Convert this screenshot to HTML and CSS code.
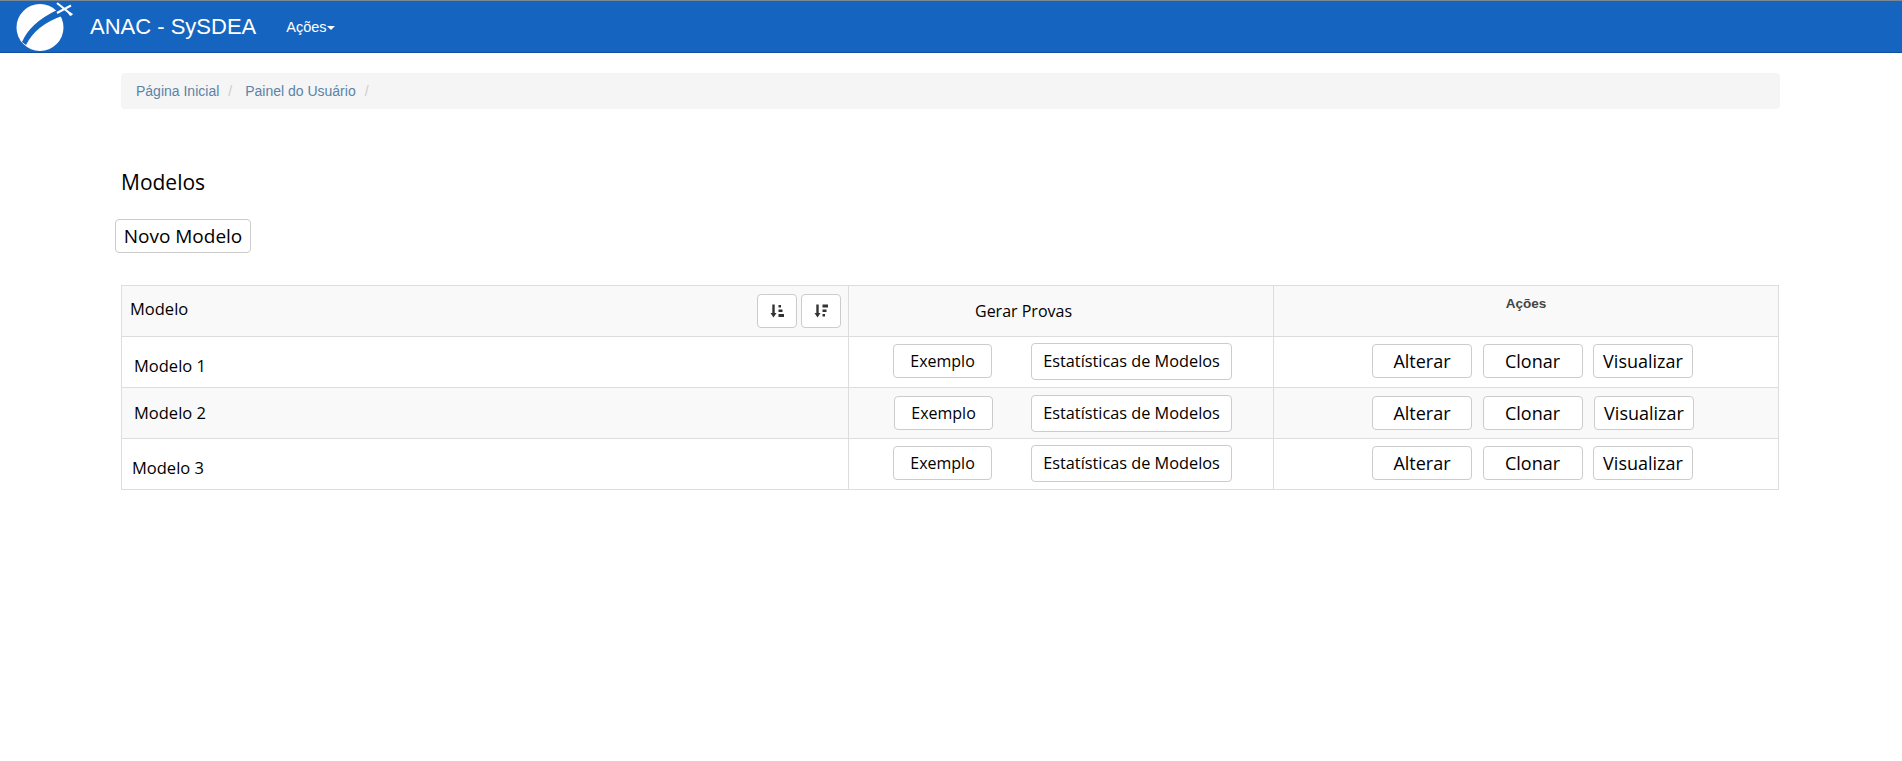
FILE: index.html
```html
<!DOCTYPE html>
<html lang="pt-BR">
<head>
  <meta charset="UTF-8" />
  <title>ANAC - SySDEA</title>
  <link rel="stylesheet" href="styles.css">
</head>
<body>

  <!-- Navbar -->
  <nav class="navbar">
    <svg class="logo" viewBox="0 0 62 52" width="62" height="52">
      <circle cx="28" cy="26.5" r="23.5" fill="#fff"/>
      <path d="M10 41 Q18 22 45 9 L50 15 Q24 24 14 44 Z" fill="#1565c0"/>
      <path d="M45 2 L60 14" stroke="#fff" stroke-width="2.2" fill="none"/>
      <path d="M59 4.5 L45 12" stroke="#fff" stroke-width="2" fill="none"/>
      <path d="M54 9 L61 13 L58 15 Z" fill="#fff"/>
    </svg>
    <span class="brand">ANAC - SySDEA</span>
    <span class="nav-link">Ações<i class="caret"></i></span>
  </nav>

  <div class="container">
    <ol class="breadcrumb">
      <li>Página Inicial</li>
      <li>Painel do Usuário</li>
    </ol>

    <h2 class="title">Modelos</h2>
    <button class="btn btn-new">Novo Modelo</button>

    <table class="models">
      <colgroup>
        <col class="col-model">
        <col class="col-exams">
        <col class="col-actions">
      </colgroup>
      <thead>
        <tr>
          <th>
            <div class="head-model">
              <span class="head-label">Modelo</span>
              <div class="sort">
                <button class="btn-sort" aria-label="Ordenar crescente">
                  <svg viewBox="0 0 14 16" width="14" height="16">
                    <path d="M3.5 1.5v10" stroke="#333" stroke-width="2.4" fill="none"/>
                    <path d="M0.5 10h6l-3 4.5z" fill="#333"/>
                    <path d="M8.5 2h2.5v2.5h-2.5zM8.5 6.5h4v2.5h-4zM8.5 11h5.5v3h-5.5z" fill="#333"/>
                  </svg>
                </button>
                <button class="btn-sort" aria-label="Ordenar decrescente">
                  <svg viewBox="0 0 14 16" width="14" height="16">
                    <path d="M3.5 1.5v10" stroke="#333" stroke-width="2.4" fill="none"/>
                    <path d="M0.5 10h6l-3 4.5z" fill="#333"/>
                    <path d="M8.5 1.5h5.5v3h-5.5zM8.5 6.5h4v2.5h-4zM8.5 11h2.5v2.5h-2.5z" fill="#333"/>
                  </svg>
                </button>
              </div>
            </div>
          </th>
          <th class="head-exams">Gerar Provas</th>
          <th class="head-actions">Ações</th>
        </tr>
      </thead>
      <tbody>
        <tr class="raised">
          <td class="name name-1">Modelo 1</td>
          <td>
            <div class="exams">
              <button class="btn btn-sample">Exemplo</button>
              <button class="btn btn-stats">Estatísticas de Modelos</button>
            </div>
          </td>
          <td>
            <div class="actions">
              <button class="btn btn-act">Alterar</button>
              <button class="btn btn-act">Clonar</button>
              <button class="btn btn-act">Visualizar</button>
            </div>
          </td>
        </tr>
        <tr class="striped">
          <td class="name name-2">Modelo 2</td>
          <td>
            <div class="exams">
              <button class="btn btn-sample btn-nudge">Exemplo</button>
              <button class="btn btn-stats">Estatísticas de Modelos</button>
            </div>
          </td>
          <td>
            <div class="actions">
              <button class="btn btn-act">Alterar</button>
              <button class="btn btn-act">Clonar</button>
              <button class="btn btn-act btn-nudge">Visualizar</button>
            </div>
          </td>
        </tr>
        <tr class="raised">
          <td class="name name-3">Modelo 3</td>
          <td>
            <div class="exams">
              <button class="btn btn-sample">Exemplo</button>
              <button class="btn btn-stats">Estatísticas de Modelos</button>
            </div>
          </td>
          <td>
            <div class="actions">
              <button class="btn btn-act">Alterar</button>
              <button class="btn btn-act">Clonar</button>
              <button class="btn btn-act">Visualizar</button>
            </div>
          </td>
        </tr>
      </tbody>
    </table>
  </div>

</body>
</html>
```

FILE: styles.css
```css
* {
  box-sizing: border-box;
}

body {
  margin: 0;
  background: #fff;
  color: #000;
  font-family: "Open Sans", "Noto Sans", sans-serif;
}

/* Navbar */
.navbar {
  display: flex;
  align-items: center;
  height: 53px;
  padding-left: 12px;
  background: #1565c0;
  border-top: 1px solid #7a8794;
  border-bottom: 1px solid #0f4f9e;
  color: #fff;
  font-family: "Liberation Sans", Arial, sans-serif;
}

.logo {
  flex: none;
}

.brand {
  margin-left: 16px;
  font-size: 22px;
}

.nav-link {
  margin-left: 30px;
  font-size: 14.5px;
}

.caret {
  display: inline-block;
  vertical-align: middle;
  border-top: 4px solid #fff;
  border-left: 4px solid transparent;
  border-right: 4px solid transparent;
}

.container {
  width: 1659px;
  margin-left: 121px;
}

.breadcrumb {
  display: flex;
  align-items: center;
  height: 36px;
  margin: 20px 0 0;
  padding: 0 15px;
  list-style: none;
  background: #f5f5f5;
  border-radius: 4px;
  font-family: "Liberation Sans", Arial, sans-serif;
  font-size: 14px;
  color: #5a83a8;
}

.breadcrumb li::after {
  content: "/";
  padding: 0 13px 0 9px;
  color: #ccc;
}

.title {
  margin: 58px 0 0;
  font-size: 21px;
  font-weight: 400;
  line-height: 30px;
}

.btn {
  padding: 0;
  background: #fff;
  border: 1px solid #ccc;
  border-radius: 4px;
  color: #000;
  font-family: inherit;
}

.btn-new {
  display: block;
  width: 136px;
  height: 34px;
  margin: 22px 0 0 -6px;
  font-size: 19px;
}

/* Table */
.models {
  width: 1658px;
  margin-top: 32px;
  border-collapse: collapse;
  table-layout: fixed;
  font-size: 16px;
}

.col-model {
  width: 727px;
}

.col-exams {
  width: 425px;
}

.models th,
.models td {
  height: 51px;
  padding: 0;
  border: 1px solid #ddd;
}

.models th {
  background: #f9f9f9;
  font-weight: 400;
}

.striped td {
  background: #f9f9f9;
}

.head-model {
  display: flex;
  align-items: center;
  justify-content: space-between;
  padding: 0 7px 0 8px;
}

.head-label {
  margin-top: -6px;
  font-size: 16.5px;
}

.head-exams {
  text-align: left;
  text-indent: 126px;
}

.models .head-actions {
  padding-top: 10px;
  vertical-align: top;
  text-align: center;
  font-family: "Liberation Sans", Arial, sans-serif;
  font-size: 13.5px;
  font-weight: 700;
  color: #444;
}

.sort {
  display: flex;
  gap: 4px;
}

.btn-sort {
  display: flex;
  align-items: center;
  justify-content: center;
  width: 40px;
  height: 34px;
  padding: 0;
  background: #fff;
  border: 1px solid #ccc;
  border-radius: 4px;
}

.name {
  font-size: 16.5px;
}

.models .name-1 {
  padding: 6px 0 0 12px;
}

.models .name-2 {
  padding: 0 0 2px 12px;
}

.models .name-3 {
  padding: 7px 0 0 10px;
}

.exams,
.actions {
  display: flex;
  align-items: center;
}

.exams {
  gap: 39px;
  padding-left: 44px;
}

.actions {
  gap: 10.5px;
  padding-left: 98px;
}

.raised .exams,
.raised .actions {
  padding-bottom: 2px;
}

.btn-sample {
  width: 99px;
  height: 34px;
  font-size: 16px;
}

.btn-stats {
  width: 201px;
  height: 37px;
  font-size: 16.3px;
}

.btn-act {
  width: 100px;
  height: 34px;
  font-size: 18px;
}

/* the second row sits a pixel to the right in places */
.btn-nudge {
  margin-left: 1px;
}

.exams .btn-nudge {
  margin-right: -1px;
}
```
